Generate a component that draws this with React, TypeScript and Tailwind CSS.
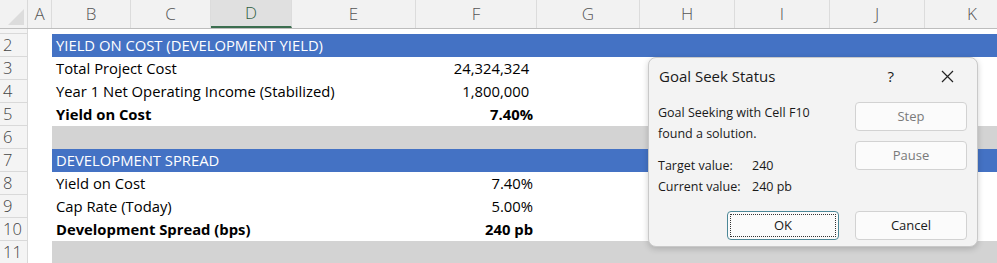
import React from "react";

type Row = {
  n: number;
  kind: "blank" | "head" | "data" | "gray";
  label?: string;
  value?: string;
  bold?: boolean;
  h?: string;
};

const COLS = [
  { id: "A", w: "w-[24px]" },
  { id: "B", w: "w-[79px]" },
  { id: "C", w: "w-[80px]" },
  { id: "D", w: "w-[81px]" },
  { id: "E", w: "w-[124px]" },
  { id: "F", w: "w-[121px]" },
  { id: "G", w: "w-[103px]" },
  { id: "H", w: "w-[95px]" },
  { id: "I", w: "w-[95px]" },
  { id: "J", w: "w-[95px]" },
  { id: "K", w: "w-[95px]" },
];

const ROWS: Row[] = [
  { n: 1, kind: "blank", h: "h-[5px]" },
  { n: 2, kind: "head", label: "YIELD ON COST (DEVELOPMENT YIELD)" },
  { n: 3, kind: "data", label: "Total Project Cost", value: "24,324,324 " },
  { n: 4, kind: "data", label: "Year 1 Net Operating Income (Stabilized)", value: "1,800,000 " },
  { n: 5, kind: "data", label: "Yield on Cost", value: "7.40%", bold: true },
  { n: 6, kind: "gray" },
  { n: 7, kind: "head", label: "DEVELOPMENT SPREAD" },
  { n: 8, kind: "data", label: "Yield on Cost", value: "7.40%" },
  { n: 9, kind: "data", label: "Cap Rate (Today)", value: "5.00%" },
  { n: 10, kind: "data", label: "Development Spread (bps)", value: "240 pb", bold: true },
  { n: 11, kind: "gray" },
];

function SheetRow({ r }: { r: Row }) {
  const bg =
    r.kind === "head"
      ? "bg-[#4472c4] text-white"
      : r.kind === "gray"
      ? "bg-[#d3d3d3]"
      : "bg-white text-black";
  return (
    <div className={`flex ${r.h ?? "h-[23px]"} items-stretch`}>
      <div className="flex w-[28px] shrink-0 items-center border-b border-r border-[#d9d9d9] bg-[#f4f4f4] pl-[3px] text-[16.5px] leading-none text-[#444] font-light">
        {r.n > 1 ? r.n : ""}
      </div>
      <div className="w-[24px] shrink-0 bg-white" />
      <div className={`flex flex-1 items-center ${bg} ${r.bold ? "font-bold" : ""}`}>
        <div className="w-[364px] shrink-0 whitespace-nowrap pl-[4px]">{r.label}</div>
        <div className="w-[121px] shrink-0 whitespace-pre pr-[4px] text-right">{r.value}</div>
      </div>
    </div>
  );
}

function Btn({
  label,
  disabled,
  focus,
}: {
  label: string;
  disabled?: boolean;
  focus?: boolean;
}) {
  return (
    <div
      className={`flex h-[29px] w-[112px] items-center justify-center rounded-[4px] border bg-[#fbfbfb] text-[13px] ${
        focus ? "border-[#4b8797] p-[2px]" : "border-[#d2d2d2]"
      } ${disabled ? "text-[#7a7a7a]" : "text-[#1a1a1a]"}`}
    >
      {focus ? (
        <div className="flex h-full w-full items-center justify-center border border-dotted border-[#333]">
          {label}
        </div>
      ) : (
        label
      )}
    </div>
  );
}

export default function App() {
  return (
    <div className="relative h-[263px] w-[997px] overflow-hidden bg-white font-['Open_Sans',sans-serif] text-[14.8px]">
      {/* column headers */}
      <div className="flex h-[29px] border-b border-[#bdbdbd] bg-[#f2f2f2]">
        <div className="relative w-[28px] shrink-0 border-r border-[#d9d9d9]">
          <svg className="absolute bottom-[3px] right-[3px]" width="16" height="16" viewBox="0 0 16 16">
            <path d="M16 0 L16 16 L0 16 Z" fill="#dcdcdc" />
          </svg>
        </div>
        {COLS.map((c) => (
          <div
            key={c.id}
            className={`${c.w} flex shrink-0 items-center justify-center border-r border-[#dcdcdc] text-[17px] font-light ${
              c.id === "D"
                ? "border-b-2 border-b-[#3c6e4f] bg-[#e0e0e0] text-[#2f5f42]"
                : "text-[#555]"
            }`}
          >
            {c.id}
          </div>
        ))}
      </div>

      {ROWS.map((r) => (
        <SheetRow key={r.n} r={r} />
      ))}

      {/* Goal Seek Status dialog */}
      <div className="absolute left-[648px] top-[57px] h-[190px] w-[330px] rounded-[8px] border border-[#c9c9c9] bg-[#f3f3f3] text-[#1a1a1a] shadow-[0_2px_6px_rgba(0,0,0,0.18)]">
        <div className="flex h-[36px] items-center pl-[10px] pr-[23px]">
          <span className="flex-1 text-[15px]">Goal Seek Status</span>
          <span className="mr-[47px] text-[15px]">?</span>
          <svg width="13" height="13" viewBox="0 0 13 13">
            <path d="M1 1 L12 12 M12 1 L1 12" stroke="#222" strokeWidth="1.2" fill="none" />
          </svg>
        </div>
        <div className="flex pl-[9px] pr-[10px] pt-[8px]">
          <div className="flex-1 text-[12.5px] leading-[21px]">
            <div>Goal Seeking with Cell F10</div>
            <div>found a solution.</div>
            <div className="mt-[11px] flex">
              <span className="w-[94px]">Target value:</span>
              <span>240</span>
            </div>
            <div className="flex">
              <span className="w-[94px]">Current value:</span>
              <span>240 pb</span>
            </div>
          </div>
          <div className="flex flex-col gap-[10px]">
            <Btn label="Step" disabled />
            <Btn label="Pause" disabled />
          </div>
        </div>
        <div className="mt-[14px] flex justify-end gap-[16px] pr-[10px]">
          <Btn label="OK" focus />
          <Btn label="Cancel" />
        </div>
      </div>
    </div>
  );
}
